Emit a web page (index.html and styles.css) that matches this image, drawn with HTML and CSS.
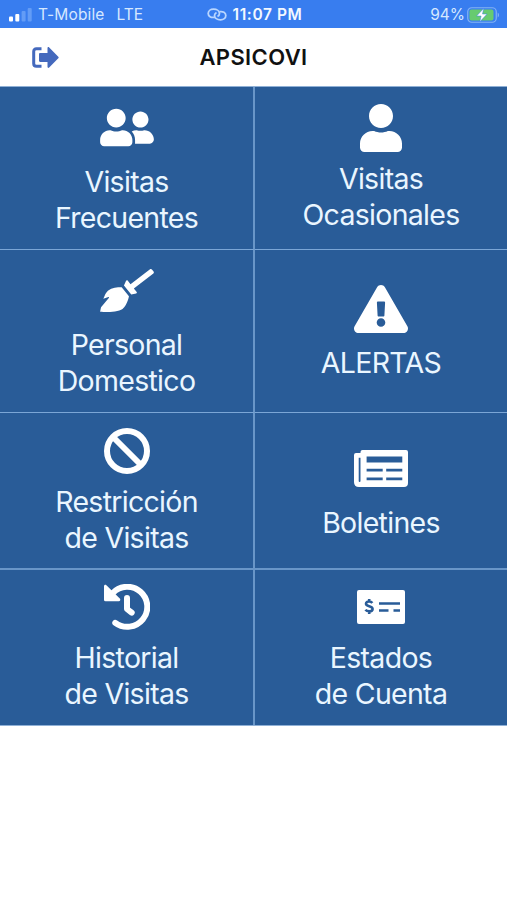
FILE: index.html
```html
<!DOCTYPE html>
<html lang="es">
<head>
  <meta charset="UTF-8" />
  <meta name="viewport" content="width=device-width, initial-scale=1.0"/>
  <title>APSICOVI</title>
  <link rel="stylesheet" href="styles.css">
</head>
<body>
  <div class="status-bar">
    <div class="status-left">
      <svg class="signal" viewBox="0 0 23 14">
        <rect x="0" y="8.5" width="4" height="5" rx="1"/>
        <rect x="6.3" y="6" width="4" height="7.5" rx="1"/>
        <rect class="off" x="12.6" y="3" width="4" height="10.5" rx="1"/>
        <rect class="off" x="18.7" y="0" width="4" height="13.5" rx="1"/>
      </svg>
      <span class="carrier">T-Mobile</span>
      <span class="network">LTE</span>
    </div>
    <div class="status-center">
      <svg class="link" viewBox="0 0 20 13">
        <path d="M7.500 9.300C4 10 1.200 8.200 1.200 5.500c0-2.500 2.300-4.300 5.300-4.300 3.400 0 6 1.800 6 4.300 0 1.300-.8 2.300-2 3"/>
        <path d="M12.500 3.700c3.500-.7 6.300 1.100 6.300 3.800 0 2.500-2.300 4.300-5.300 4.300-3.400 0-6-1.800-6-4.300 0-1.300.8-2.300 2-3"/>
      </svg>
      <span class="time">11:07 PM</span>
    </div>
    <div class="status-right">
      <span class="percent">94%</span>
      <svg class="battery" viewBox="0 0 33 16">
        <rect class="battery-shell" x=".75" y=".75" width="28.500" height="14.500" rx="4"/>
        <rect class="battery-level" x="2.500" y="2.500" width="24" height="11" rx="2"/>
        <path class="battery-tip" d="M30.700 5.500c1.700.8 1.700 4.200 0 5z"/>
        <path class="battery-bolt" d="M16.800 1.300 9.600 9h4.500l-1.300 5.800L20.100 7h-4.600z"/>
      </svg>
    </div>
  </div>

  <header class="header">
    <a href="#" class="logout" aria-label="Salir">
      <svg viewBox="0 0 27 21">
        <path class="door" d="M9.500 1.800H4.500Q1.700 1.800 1.700 4.600V16.400Q1.700 19.200 4.500 19.200H9.500"/>
        <path d="M15.500 1.200c0-1.100.9-1.500 1.700-.8l9.100 9.300c.5.500.5 1.100 0 1.600l-9.100 9.300c-.8.7-1.700.3-1.700-.8v-4.800H8.200c-.7 0-1.200-.5-1.200-1.200V7.200C7 6.500 7.500 6 8.200 6h7.300z"/>
      </svg>
    </a>
    <h1>APSICOVI</h1>
  </header>

  <main class="menu">
    <a href="#" class="tile frecuentes">
      <svg viewBox="0 0 640 512"><path d="M192 256c61.900 0 112-50.100 112-112S253.900 32 192 32 80 82.100 80 144s50.100 112 112 112zm76.800 32h-8.300c-20.800 10-43.900 16-68.500 16s-47.600-6-68.500-16h-8.300C51.600 288 0 339.600 0 403.200V432c0 26.500 21.500 48 48 48h288c26.500 0 48-21.500 48-48v-28.800c0-63.600-51.600-115.200-115.200-115.200zM480 256c53 0 96-43 96-96s-43-96-96-96-96 43-96 96 43 96 96 96zm48 32h-3.800c-13.900 4.800-28.600 8-44.200 8s-30.300-3.200-44.200-8H432c-20.400 0-39.200 5.900-55.700 15.400 24.400 26.300 39.700 61.200 39.700 99.800v38.400c0 2.200-.5 4.300-.6 6.400H592c26.500 0 48-21.500 48-48 0-61.900-50.100-112-112-112z"/></svg>
      <span>Visitas<br>Frecuentes</span>
    </a>

    <a href="#" class="tile ocasionales">
      <svg viewBox="0 0 448 512"><path d="M224 256c70.700 0 128-57.300 128-128S294.700 0 224 0 96 57.300 96 128s57.300 128 128 128zm89.600 32h-16.700c-22.200 10.200-46.900 16-72.900 16s-50.600-5.800-72.900-16h-16.700C60.200 288 0 348.200 0 422.400V464c0 26.500 21.500 48 48 48h352c26.500 0 48-21.500 48-48v-41.600c0-74.200-60.200-134.400-134.400-134.400z"/></svg>
      <span>Visitas<br>Ocasionales</span>
    </a>

    <a href="#" class="tile personal">
      <svg viewBox="0 0 640 512"><path d="M256.470 216.770l86.730 109.180s-16.600 102.360-76.570 150.120C206.660 523.850 0 510.190 0 510.190s3.800-23.140 11-55.430l94.620-112.170c3.970-4.700-.87-11.620-6.650-9.500l-60.400 22.090c14.440-41.660 32.720-80.040 54.600-97.470 59.970-47.760 163.300-40.940 163.300-40.940zM636.530 31.030l-19.860-25c-5.490-6.900-15.520-8.050-22.410-2.560l-232.480 177.800-34.140-42.970c-5.090-6.410-15.140-5.210-18.590 2.210l-25.330 54.550 86.730 109.180 58.800-12.450c8-1.690 11.420-11.200 6.340-17.600l-34.090-42.920 232.480-177.800c6.890-5.480 8.040-15.530 2.550-22.440z"/></svg>
      <span>Personal<br>Domestico</span>
    </a>

    <a href="#" class="tile alertas">
      <svg viewBox="0 0 576 512"><path d="M569.517 440.013C587.975 472.007 564.806 512 527.940 512H48.054c-36.937 0-59.999-40.055-41.577-71.987L246.423 23.985c18.467-32.009 64.720-31.951 83.154 0l239.940 416.028zM288 354c-25.405 0-46 20.595-46 46s20.595 46 46 46 46-20.595 46-46-20.595-46-46-46zm-43.673-165.346l7.418 136c.347 6.364 5.609 11.346 11.982 11.346h48.546c6.373 0 11.635-4.982 11.982-11.346l7.418-136c.375-6.874-5.098-12.654-11.982-12.654h-63.383c-6.884 0-12.356 5.780-11.981 12.654z"/></svg>
      <span>ALERTAS</span>
    </a>

    <a href="#" class="tile restriccion">
      <svg class="outline" viewBox="0 0 46 46">
        <circle cx="23" cy="23" r="20"/>
        <path d="M9.500 9.500l27 27"/>
      </svg>
      <span>Restricción<br>de Visitas</span>
    </a>

    <a href="#" class="tile boletines">
      <svg viewBox="0 0 54 37"><path fill-rule="evenodd" d="M8.500 0H52Q54 0 54 2V33Q54 37 50 37H5Q0 37 0 32V5Q0 3 2 3H6.500V2Q6.500 0 8.500 0zM4.700 7.700V31Q4.700 32 5.600 32T6.500 31V7.700zM12.600 6.400V12.400H48.300V6.400zM12.600 18.700V21.400H28.700V18.700zM32.200 18.700V21.400H48.300V18.700zM12.600 27.600V30.300H28.700V27.600zM32.200 27.600V30.300H48.300V27.600z"/></svg>
      <span>Boletines</span>
    </a>

    <a href="#" class="tile historial">
      <svg viewBox="0 0 46 46">
        <path class="arc" d="M11.300 38.800A20 20 0 1 0 8.800 9"/>
        <path class="hands" d="M23 14V25L27.700 28.700"/>
        <path d="M0 2.200C0 .8 1.500.3 2.400 1.200L15.800 14.600C16.800 15.600 16.200 17.300 14.800 17.300H1.500Q0 17.300 0 15.800z"/>
      </svg>
      <span>Historial<br>de Visitas</span>
    </a>

    <a href="#" class="tile estados">
      <svg viewBox="0 0 48 34">
        <rect width="48" height="34" rx="2"/>
        <path class="mark" d="M15.300 12.900C14.600 11.900 13.500 11.500 12.100 11.500 10.200 11.500 9 12.300 9 13.700 9 17 15.600 15.300 15.600 18.900 15.600 20.500 14.200 21.300 12.200 21.300 10.600 21.300 9.300 20.800 8.400 19.700M12.200 9V12M12.200 21V24"/>
        <path class="lines" d="M22 13.500H43M22 20.500H31.500M36.500 20.500H43"/>
      </svg>
      <span>Estados<br>de Cuenta</span>
    </a>
  </main>
</body>
</html>
```
FILE: styles.css
```css
:root {
  --bar: #387def;
  --tile: #295c98;
  --line: #6996c8;
  --logout: #4469bd;
}

* {
  box-sizing: border-box;
  margin: 0;
  padding: 0;
}

body {
  background: #fff;
  font-family: Inter, 'Liberation Sans', sans-serif;
  min-height: 100vh;
}

svg {
  display: block;
  flex: none;
}

/* Barra de estado */
.status-bar {
  display: grid;
  grid-template-columns: 1fr auto 1fr;
  height: 28px;
  padding: 1px 7px 0 9px;
  background: var(--bar);
  color: #d5e8ff;
  font-size: 15.5px;
}

.status-left,
.status-center,
.status-right {
  display: flex;
  align-items: center;
  white-space: nowrap;
}

.signal {
  width: 23px;
  height: 14px;
  margin: 0 6px 0 0;
  fill: #fff;
}

.signal .off {
  fill: #639cf6;
}

.carrier {
  letter-spacing: 0.15px;
}

.network {
  margin-left: 12px;
}

.link {
  width: 20px;
  height: 13px;
  margin-right: 6px;
  fill: none;
  stroke: #b9d6ff;
  stroke-width: 1.8;
}

.time {
  color: #f2f8ff;
  font-weight: 600;
  letter-spacing: 0.6px;
}

.status-right {
  justify-content: flex-end;
}

.battery {
  width: 33px;
  height: 16px;
  margin-left: 2px;
}

.battery-shell {
  fill: none;
  stroke: #82b2f4;
  stroke-width: 1.2;
}

.battery-level {
  fill: #67cb70;
}

.battery-tip {
  fill: #82b2f4;
}

.battery-bolt {
  fill: #fff;
  stroke: var(--bar);
  stroke-width: 0.5;
}

/* Encabezado */
.header {
  display: grid;
  grid-template-columns: 1fr auto 1fr;
  align-items: center;
  height: 58px;
}

.logout {
  justify-self: start;
  margin-left: 31.5px;
}

.logout svg {
  width: 27px;
  height: 21px;
  fill: var(--logout);
}

.logout .door {
  fill: none;
  stroke: var(--logout);
  stroke-width: 3;
}

h1 {
  color: #111;
  font-size: 22px;
  font-weight: 600;
  letter-spacing: 0.4px;
}

/* Menú */
.menu {
  display: grid;
  grid-template-columns: 255px 1fr;
  grid-template-rows: 163px 163px 157px 155px;
  border-top: 1px solid #8fb0d6;
  border-bottom: 1px solid #8fb0d6;
}

.tile {
  display: flex;
  flex-direction: column;
  align-items: center;
  background: var(--tile);
  border-bottom: 1px solid #7ba6d6;
  color: #eaf6ff;
  font-size: 28.5px;
  line-height: 36px;
  letter-spacing: -0.7px;
  text-align: center;
  text-decoration: none;
}

.tile:nth-child(odd) {
  border-right: 2px solid var(--line);
}

.tile:nth-child(5),
.tile:nth-child(6) {
  border-bottom: 2px solid var(--line);
}

.tile:nth-last-child(-n+2) {
  border-bottom: none;
}

.tile svg {
  fill: #fff;
}

.frecuentes,
.personal {
  padding-top: 19px;
}

.frecuentes svg,
.personal svg {
  width: 54px;
  height: 43px;
  margin-bottom: 15px;
}

.ocasionales {
  padding-top: 17px;
}

.ocasionales svg {
  width: 42px;
  height: 48px;
  margin-bottom: 9px;
}

.alertas {
  padding-top: 35px;
}

.alertas svg {
  width: 54px;
  height: 48px;
  margin-bottom: 12px;
}

.restriccion {
  padding-top: 15px;
}

.restriccion svg,
.historial svg {
  width: 46px;
  height: 46px;
  margin-bottom: 10px;
}

.tile .outline {
  fill: none;
  stroke: #fff;
  stroke-width: 6;
}

.boletines {
  padding-top: 37px;
}

.boletines svg {
  width: 54px;
  height: 37px;
  margin-bottom: 18px;
}

.historial {
  padding-top: 14px;
}

.historial .arc,
.historial .hands {
  fill: none;
  stroke: #fff;
  stroke-width: 6;
  stroke-linecap: round;
  stroke-linejoin: round;
}

.estados {
  padding-top: 20px;
}

.estados svg {
  width: 48px;
  height: 34px;
  margin-bottom: 16px;
}

.estados .mark {
  fill: none;
  stroke: var(--tile);
  stroke-width: 2.6;
}

.estados .lines {
  fill: none;
  stroke: var(--tile);
  stroke-width: 2.4;
}
```
